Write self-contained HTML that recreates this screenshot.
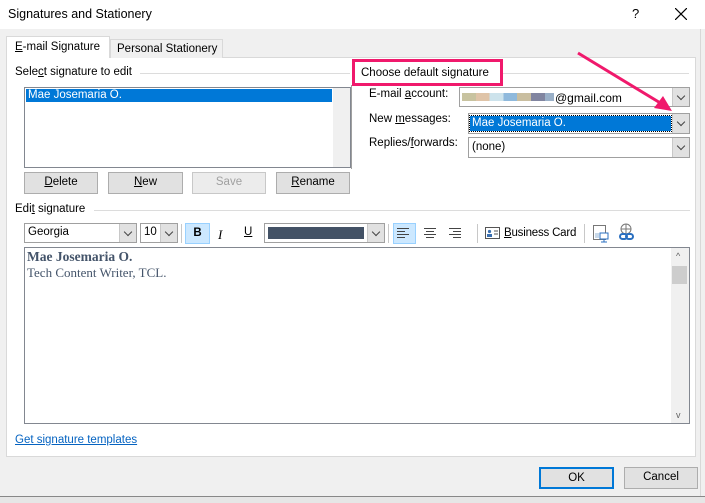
<!DOCTYPE html>
<html><head><meta charset="utf-8"><style>
*{box-sizing:border-box;margin:0;padding:0}
body{width:705px;height:503px;background:#f0f0f0;font-family:"Liberation Sans",sans-serif;font-size:11.5px;color:#000;position:relative;overflow:hidden}
.a{position:absolute}
.btn{position:absolute;background:#e1e1e1;border:1px solid #adadad;text-align:center;line-height:19px}
.combo{position:absolute;background:#fff;border:1px solid #a0a0a0}
.dd{position:absolute;right:0;top:0;bottom:0;width:17px;background:#e1e1e1;border-left:1px solid #c8c8c8}
.dd:after{content:"";position:absolute;left:5px;top:5px;width:5px;height:5px;border-right:1px solid #444;border-bottom:1px solid #444;transform:rotate(45deg)}
.line{position:absolute;height:1px;background:#dcdcdc}
u{text-decoration:underline}
</style></head><body>
<div class="a" style="left:0;top:0;width:705px;height:29px;background:#fff"></div>
<div class="a" style="left:8px;top:7px;font-size:12.5px">Signatures and Stationery</div>
<div class="a" style="left:632px;top:6px;font-size:13px">?</div>
<svg class="a" style="left:675px;top:8px" width="12" height="12"><path d="M0 0L12 12M12 0L0 12" stroke="#000" stroke-width="1.2"/></svg>
<div class="a" style="left:700px;top:29px;width:1px;height:468px;background:#d8d8d8"></div>
<div class="a" style="left:0;top:496px;width:705px;height:1px;background:#888"></div>
<div class="a" style="left:0;top:497px;width:705px;height:6px;background:#e6e6e6"></div>

<div class="a" style="left:6px;top:57px;width:690px;height:400px;background:#fff;border:1px solid #d9d9d9"></div>
<div class="a" style="left:110px;top:39px;width:113px;height:19px;background:#f0f0f0;border:1px solid #d9d9d9;border-bottom:none;padding:3px 0 0 6px">Personal Stationery</div>
<div class="a" style="left:6px;top:36px;width:104px;height:22px;background:#fff;border:1px solid #d9d9d9;border-bottom:none;padding:4px 0 0 8px"><u>E</u>-mail Signature</div>

<div class="a" style="left:15px;top:66px">Sele<u>c</u>t signature to edit</div>
<div class="line" style="left:140px;top:73px;width:210px"></div>
<div class="a" style="left:24px;top:87px;width:327px;height:81px;background:#fff;border:1px solid #828790"></div>
<div class="a" style="left:26px;top:89px;width:306px;height:13px;background:#0078d7;color:#fff;line-height:13px;padding-left:2px">Mae Josemaria O.</div>
<div class="a" style="left:333px;top:88px;width:17px;height:79px;background:#f0f0f0"></div>
<div class="btn" style="left:24px;top:172px;width:74px;height:22px"><u>D</u>elete</div>
<div class="btn" style="left:108px;top:172px;width:75px;height:22px"><u>N</u>ew</div>
<div class="btn" style="left:192px;top:172px;width:74px;height:22px;color:#a0a0a0;background:#ececec;border-color:#c8c8c8">Save</div>
<div class="btn" style="left:276px;top:172px;width:74px;height:22px"><u>R</u>ename</div>

<div class="a" style="left:351px;top:85px;width:1px;height:84px;background:#a0a0a0"></div>
<div class="line" style="left:502px;top:73px;width:187px"></div>
<div class="a" style="left:352px;top:59px;width:151px;height:27px;border:3px solid #f0196c;background:#fff"></div>
<div class="a" style="left:361px;top:67px">Choose default signature</div>
<div class="a" style="left:369px;top:88px">E-mail <u>a</u>ccount:</div>
<div class="combo" style="left:459px;top:87px;width:231px;height:20px"><div class="dd"></div>
<div class="a" style="left:2px;top:5px;width:92px;height:8px;background:linear-gradient(90deg,#c8c3a0 0 15%,#dfc4a8 15% 30%,#cde3ec 30% 45%,#8fb9dc 45% 60%,#c9bea0 60% 75%,#8185a0 75% 90%,#9ab0c8 90%)"></div>
<div class="a" style="left:95px;top:3px;font-size:12px">@gmail.com</div></div>
<div class="a" style="left:369px;top:113px">New <u>m</u>essages:</div>
<div class="combo" style="left:468px;top:113px;width:222px;height:21px"><div class="dd"></div>
<div class="a" style="left:1px;top:2px;width:201px;height:15px;background:#0078d7;color:#fff;padding-left:2px;line-height:15px;outline:1px dotted #000">Mae Josemaria O.</div></div>
<div class="a" style="left:369px;top:137px">Replies/<u>f</u>orwards:</div>
<div class="combo" style="left:468px;top:137px;width:222px;height:21px"><div class="dd"></div><div class="a" style="left:3px;top:3px">(none)</div></div>

<svg class="a" style="left:570px;top:48px" width="110" height="70"><line x1="8" y1="5" x2="92" y2="56" stroke="#f0196c" stroke-width="3"/><polygon points="102,63 84,60 93,48" fill="#f0196c"/></svg>

<div class="a" style="left:15px;top:203px">Edi<u>t</u> signature</div>
<div class="line" style="left:94px;top:210px;width:596px"></div>
<div class="combo" style="left:24px;top:223px;width:113px;height:20px"><div class="dd"></div><div class="a" style="left:3px;top:2px">Georgia</div></div>
<div class="combo" style="left:140px;top:223px;width:38px;height:20px"><div class="dd"></div><div class="a" style="left:3px;top:2px">10</div></div>
<div class="a" style="left:181px;top:224px;width:1px;height:19px;background:#c8c8c8"></div>
<div class="a" style="left:185px;top:223px;width:25px;height:21px;background:#cce8ff;border:1px solid #99d1ff;text-align:center;font-weight:bold;line-height:19px">B</div>
<div class="a" style="left:218px;top:227px;font-style:italic;font-family:'Liberation Serif',serif;font-size:13px">I</div>
<div class="a" style="left:244px;top:226px"><u>U</u></div>
<div class="combo" style="left:264px;top:223px;width:121px;height:20px"><div class="dd"></div><div class="a" style="left:3px;top:3px;width:96px;height:12px;background:#435266"></div></div>
<div class="a" style="left:388px;top:224px;width:1px;height:19px;background:#c8c8c8"></div>
<div class="a" style="left:393px;top:223px;width:23px;height:21px;background:#cce8ff;border:1px solid #99d1ff"></div>
<svg class="a" style="left:397px;top:228px" width="70" height="12" stroke="#444" stroke-width="1"><path d="M0 .5h12M0 3.5h8M0 6.5h12M0 9.5h8"/><path d="M27 .5h12M29 3.5h8M27 6.5h12M29 9.5h8"/><path d="M52 .5h12M56 3.5h8M52 6.5h12M56 9.5h8"/></svg>
<div class="a" style="left:477px;top:224px;width:1px;height:19px;background:#c8c8c8"></div>
<svg class="a" style="left:485px;top:227px" width="16" height="13"><rect x=".5" y=".5" width="14" height="11" fill="#fff" stroke="#555"/><circle cx="4.5" cy="4.5" r="1.6" fill="#3a6fb0"/><rect x="2" y="7" width="5" height="3" fill="#3a6fb0"/><path d="M9 4h4M9 7h4" stroke="#555"/></svg>
<div class="a" style="left:504px;top:227px;font-size:11.5px;letter-spacing:-0.2px"><u>B</u>usiness Card</div>
<div class="a" style="left:584px;top:224px;width:1px;height:19px;background:#c8c8c8"></div>
<svg class="a" style="left:592px;top:224px" width="18" height="20"><rect x="1.5" y="1.5" width="12" height="14" fill="#fff" stroke="#777"/><rect x="8" y="9" width="8" height="6" fill="#fff" stroke="#2a6fc0"/><path d="M12 15v3M9 18h6" stroke="#2a6fc0"/><rect x="3" y="9" width="4" height="5" fill="#c8d8e8"/></svg>
<svg class="a" style="left:618px;top:223px" width="18" height="20"><circle cx="8" cy="6" r="5" fill="none" stroke="#777"/><path d="M3 6h10M8 1v10" stroke="#777"/><rect x="2" y="11" width="7" height="5" rx="2.5" fill="none" stroke="#2a6fc0" stroke-width="2"/><rect x="8" y="11" width="7" height="5" rx="2.5" fill="none" stroke="#2a6fc0" stroke-width="2"/></svg>

<div class="a" style="left:24px;top:247px;width:666px;height:177px;background:#fff;border:1px solid #828790"></div>
<div class="a" style="left:671px;top:248px;width:18px;height:175px;background:#f0f0f0"></div>
<div class="a" style="left:672px;top:266px;width:15px;height:18px;background:#cdcdcd"></div>
<div class="a" style="left:676px;top:251px;font-size:9px;color:#606060">^</div>
<div class="a" style="left:676px;top:410px;font-size:9px;color:#606060">v</div>
<div class="a" style="left:27px;top:249px;font-family:'Liberation Serif',serif;font-weight:bold;font-size:13.5px;color:#44546a">Mae Josemaria O.</div>
<div class="a" style="left:27px;top:265px;font-family:'Liberation Serif',serif;font-size:13px;color:#44546a">Tech Content Writer, TCL.</div>

<div class="a" style="left:15px;top:434px;color:#0563c1;text-decoration:underline">Get signature templates</div>

<div class="btn" style="left:539px;top:467px;width:75px;height:22px;border:2px solid #0078d7;line-height:18px">OK</div>
<div class="btn" style="left:624px;top:467px;width:74px;height:22px">Cancel</div>
</body></html>
